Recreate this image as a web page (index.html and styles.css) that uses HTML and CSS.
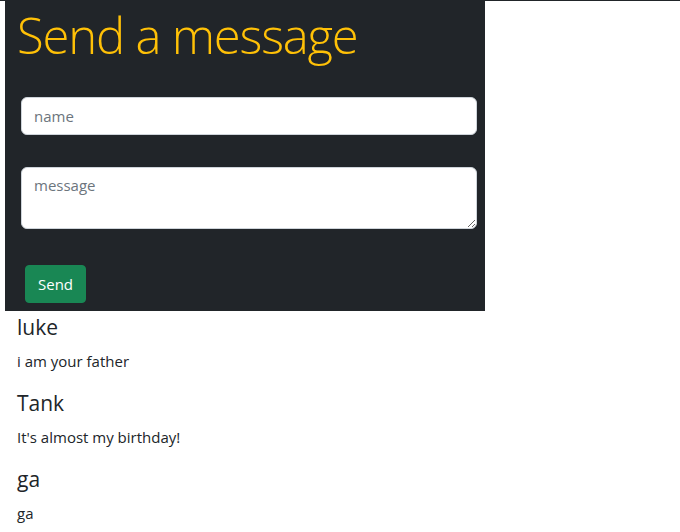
FILE: index.html
```html
<!DOCTYPE html>
<html>
<head>
<meta charset="utf-8">
<link rel="stylesheet" href="styles.css">
</head>
<body>
<div class="page">
  <form class="panel">
    <h1 class="title">Send a message</h1>
    <input class="field" type="text" placeholder="name">
    <textarea class="field area" placeholder="message"></textarea>
    <button class="send" type="button">Send</button>
  </form>
  <div class="messages">
    <div class="msg">
      <h4 class="author">luke</h4>
      <p class="body">i am your father</p>
    </div>
    <div class="msg">
      <h4 class="author">Tank</h4>
      <p class="body">It's almost my birthday!</p>
    </div>
    <div class="msg">
      <h4 class="author">ga</h4>
      <p class="body">ga</p>
    </div>
  </div>
</div>
</body>
</html>
```
FILE: styles.css
```css
* { box-sizing: border-box; }
html, body { margin: 0; padding: 0; background: #fff; }
body {
  font-family: "Open Sans", "Noto Sans", sans-serif;
  font-size: 15px;
  line-height: 24px;
  color: #212529;
  border-top: 1px solid #212529;
}
.page { padding: 0 0 0 5px; }
.panel {
  width: 480px;
  background: #212529;
  display: flex;
  flex-direction: column;
  align-items: flex-start;
  padding: 0 8px 8px 12px;
  margin: -1px 0 0 0;
  height: 311px;
}
.title {
  margin: 0;
  font-weight: 300;
  font-size: 49px;
  line-height: 60px;
  color: #ffc107;
  letter-spacing: -1.2px;
  padding-top: 5px;
}
.field {
  display: block;
  width: 456px;
  margin-left: 4px;
  height: 38px;
  border: 1px solid #ced4da;
  border-radius: 6px;
  background: #fff;
  padding: 6px 12px;
  font-family: inherit;
  font-size: 15px;
  color: #212529;
  margin-top: 32px;
}
.field::placeholder { color: #6c757d; }
.area {
  height: 62px;
  margin-top: 32px;
  padding-top: 7px;
  resize: vertical;
}
.send {
  margin-top: 36px;
  margin-left: 8px;
  width: 61px;
  height: 38px;
  background: #198754;
  border: 1px solid #198754;
  border-radius: 4px;
  color: #fff;
  font-family: inherit;
  font-size: 15px;
  padding: 0;
}
.messages { padding: 3px 12px 0 12px; }
.author {
  margin: 0 0 8px 0;
  font-size: 21px;
  font-weight: 400;
  line-height: 27px;
}
.body {
  margin: 0 0 17px 0;
}
```
